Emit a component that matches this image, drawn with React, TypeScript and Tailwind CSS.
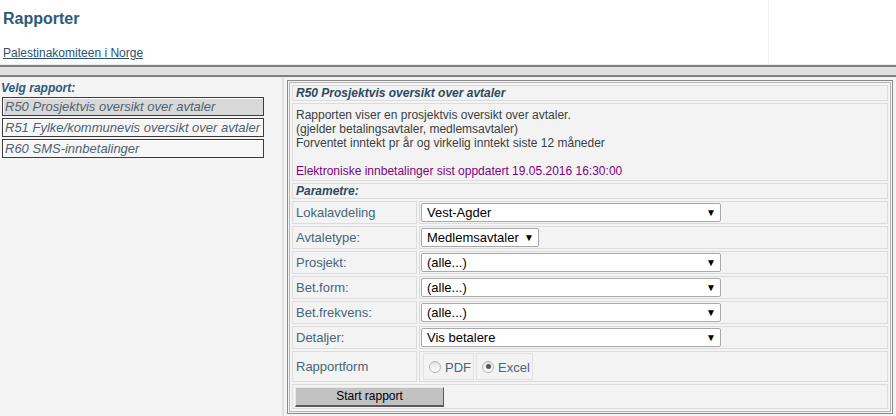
import React from "react";

const font = { fontFamily: '"Liberation Sans", Arial, sans-serif' };

function Select({ value, width }: { value: string; width: string }) {
	return (
		<div
			className={`${width} h-[19px] bg-white border border-[#a9a9a9] rounded-[2px] flex items-center justify-between pl-[5px] pr-[4px] text-[13px] leading-[15px] text-black`}
		>
			<span>{value}</span>
			<span className="text-[10px] leading-none">▼</span>
		</div>
	);
}

function ReportItem({ text, active }: { text: string; active?: boolean }) {
	return (
		<div
			className={`w-[262px] h-[19px] mb-[2px] border border-[#3c3c3c] shadow-[inset_1px_1px_0_#fff] overflow-hidden whitespace-nowrap italic text-[13px] leading-[17px] pl-[2px] text-[#4f6272] ${
				active ? "bg-[#d8d8d8]" : "bg-[#f6f6f6]"
			}`}
		>
			{text}
		</div>
	);
}

function Radio({ checked, label }: { checked?: boolean; label: string }) {
	return (
		<div className="h-[27px] border border-[#e2e2e2] flex items-center gap-[4px] pl-[5px] pr-[2px] text-[13px] text-[#4a6478]">
			<span className="w-[12px] h-[12px] rounded-full border border-[#b5b5b5] bg-gradient-to-b from-[#e4e4e4] to-white flex items-center justify-center">
				{checked && <span className="w-[5px] h-[5px] rounded-full bg-[#555]" />}
			</span>
			<span className="mt-[3px]">{label}</span>
		</div>
	);
}

const params: { label: string; value: string; width?: string }[] = [
	{ label: "Lokalavdeling", value: "Vest-Agder" },
	{ label: "Avtaletype:", value: "Medlemsavtaler", width: "w-[118px]" },
	{ label: "Prosjekt:", value: "(alle...)" },
	{ label: "Bet.form:", value: "(alle...)" },
	{ label: "Bet.frekvens:", value: "(alle...)" },
	{ label: "Detaljer:", value: "Vis betalere" },
];

export default function App() {
	const cell = "border border-[#dcdcdc] bg-[#f3f3f3]";
	return (
		<div className="w-[896px] h-[416px] overflow-hidden bg-white" style={font}>
			{/* header */}
			<div className="h-[64px] flex">
				<div className="flex-1 pl-[3px]">
					<div className="pt-[10px] text-[16px] font-bold text-[#2d5a7b] leading-[18px]">
						Rapporter
					</div>
					<div className="mt-[18px] text-[12px] leading-[14px] text-[#2b5070] underline">
						Palestinakomiteen i Norge
					</div>
				</div>
				<div className="w-[128px] border-l border-[#f0f0f0]" />
			</div>
			<div className="h-[1px] bg-[#ececec]" />
			<div className="h-[2px] bg-[#808080]" />
			<div className="h-[8px] bg-[#e0e0e0]" />
			<div className="h-[2px] bg-[#808080]" />
			<div className="h-[1px] bg-[#ececec]" />

			{/* body */}
			<div className="flex bg-[#f4f4f4] h-[338px]">
				<div className="w-[284px] border-r-2 border-[#e0e0e0] pl-[2px] pt-[3px]">
					<div className="italic font-bold text-[12px] leading-[14px] text-[#2d5a7b] -ml-[1px] mb-[2px]">
						Velg rapport:
					</div>
					<ReportItem text="R50 Prosjektvis oversikt over avtaler" active />
					<ReportItem text="R51 Fylke/kommunevis oversikt over avtaler" />
					<ReportItem text="R60 SMS-innbetalinger" />
				</div>
				<div className="flex-1 pl-[3px] pt-[2px] pr-[3px]">
					<div className="border border-[#8a8a8a] p-[1px]">
						<div className="border border-[#b8b8b8]">
							<table className="w-full border-separate border-spacing-[2px] text-[12px] leading-[14px]">
								<tbody>
									<tr>
										<td
											colSpan={2}
											className={`${cell} h-[16px] px-[3px] italic font-bold text-[#2d4a60]`}
										>
											R50 Prosjektvis oversikt over avtaler
										</td>
									</tr>
									<tr>
										<td
											colSpan={2}
											className={`${cell} h-[76px] px-[3px] pt-[4px] pb-[2px] align-top text-[#3a3f44]`}
										>
											<div>Rapporten viser en prosjektvis oversikt over avtaler.</div>
											<div>(gjelder betalingsavtaler, medlemsavtaler)</div>
											<div>Forventet inntekt pr år og virkelig inntekt siste 12 måneder</div>
											<div className="h-[14px]" />
											<div className="text-[#800080]">
												Elektroniske innbetalinger sist oppdatert 19.05.2016 16:30:00
											</div>
										</td>
									</tr>
									<tr>
										<td
											colSpan={2}
											className={`${cell} h-[16px] px-[3px] italic font-bold text-[#2d4a60]`}
										>
											Parametre:
										</td>
									</tr>
									{params.map((p) => (
										<tr key={p.label}>
											<td className={`${cell} w-[125px] h-[23px] px-[3px] text-[13px] text-[#4a6478]`}>
												{p.label}
											</td>
											<td className={`${cell} h-[23px] px-[1px]`}>
												<Select value={p.value} width={p.width ?? "w-[300px]"} />
											</td>
										</tr>
									))}
									<tr>
										<td className={`${cell} h-[31px] px-[3px] text-[13px] text-[#4a6478]`}>
											Rapportform
										</td>
										<td className={`${cell} h-[31px] px-[3px]`}>
											<div className="flex gap-[2px]">
												<Radio label="PDF" />
												<Radio label="Excel" checked />
											</div>
										</td>
									</tr>
									<tr>
										<td colSpan={2} className={`${cell} h-[25px] px-[2px]`}>
											<button className="block w-[149px] h-[20px] bg-[#c2c2c2] border border-t-[#e8e8e8] border-l-[#e8e8e8] border-b-[#5a5a5a] border-r-[#5a5a5a] border-b-2 text-[12px] text-black leading-[16px]">
												Start rapport
											</button>
										</td>
									</tr>
								</tbody>
							</table>
						</div>
					</div>
				</div>
			</div>
		</div>
	);
}
